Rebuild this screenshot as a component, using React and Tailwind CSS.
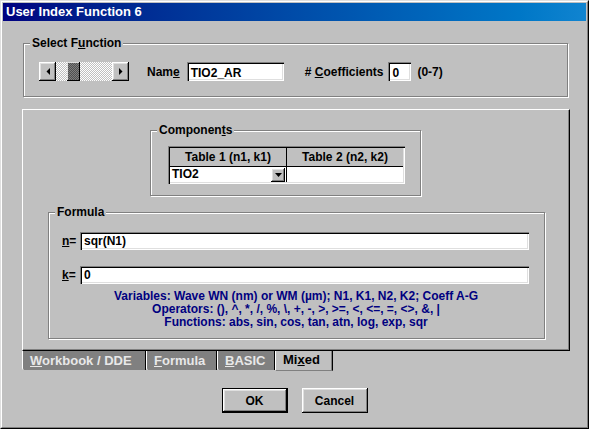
import React from 'react';

// win95 bevels
const raised = 'shadow-[inset_-1px_-1px_0_#000,inset_1px_1px_0_#fff,inset_-2px_-2px_0_#808080,inset_2px_2px_0_#dfdfdf]';
const sunken = 'shadow-[inset_1px_1px_0_#808080,inset_2px_2px_0_#000,inset_-1px_-1px_0_#fff,inset_-2px_-2px_0_#dfdfdf]';
const dither = 'bg-[repeating-conic-gradient(#c0c0c0_0_25%,#ffffff_0_50%)] bg-[length:2px_2px]';
const thumbDither = 'bg-[repeating-conic-gradient(#808080_0_25%,#505050_0_50%)] bg-[length:2px_2px]';

function GroupBox({ label, className, children }) {
  return (
    <div className={`relative border border-[#808080] shadow-[1px_1px_0_#fff,inset_1px_1px_0_#fff] ${className}`}>
      <span className="absolute -top-[8px] left-[6px] bg-[#c0c0c0] px-[2px] leading-[14px]">{label}</span>
      {children}
    </div>
  );
}

function Arrow({ dir }) {
  return (
    <svg width="4" height="7" viewBox="0 0 4 7">
      {dir === 'left' ? <polygon points="4,0 4,7 0.5,3.5" fill="#000" /> : <polygon points="0,0 0,7 3.5,3.5" fill="#000" />}
    </svg>
  );
}

function Scrollbar() {
  return (
    <div className="flex h-[19px] w-[90px]">
      <div className={`w-[17px] h-full bg-[#c0c0c0] ${raised} flex items-center justify-center`}>
        <Arrow dir="left" />
      </div>
      <div className={`flex-1 h-full ${dither} pl-[11px]`}>
        <div className={`w-[13px] h-full ${thumbDither} shadow-[inset_-1px_-1px_0_#000,inset_1px_1px_0_#dfdfdf]`} />
      </div>
      <div className={`w-[17px] h-full bg-[#c0c0c0] ${raised} flex items-center justify-center`}>
        <Arrow dir="right" />
      </div>
    </div>
  );
}

function Field({ className, children }) {
  return <div className={`bg-white ${sunken} pl-[4px] pt-[2px] ${className}`}>{children}</div>;
}

function Tab({ children, active, className }) {
  if (active) {
    return (
      <div className={`h-[20px] bg-[#c0c0c0] text-black border-l border-white border-r border-r-black border-b border-b-[#808080] shadow-[inset_-1px_0_0_#808080] leading-[18px] ${className}`}>
        {children}
      </div>
    );
  }
  return (
    <div className={`h-[19px] bg-[#808080] text-[#e8e8e8] border-l border-white border-r border-r-black leading-[19px] rounded-bl-[2px] ${className}`}>
      {children}
    </div>
  );
}

export default function App() {
  return (
    <div className="w-[589px] h-[429px] bg-[#c0c0c0] border border-t-[#dfdfdf] border-l-[#dfdfdf] border-r-black border-b-black font-['Liberation_Sans',Arial,sans-serif] font-bold text-[12px] text-black select-none">
      <div className="h-full border border-t-white border-l-white border-r-[#808080] border-b-[#808080] p-[1px] flex flex-col">
        {/* title bar */}
        <div className="h-[18px] bg-linear-to-r from-[#000080] to-[#1084d0] text-white text-[13px] leading-[18px] pl-[3px]">
          User Index Function 6
        </div>

        {/* select function */}
        <GroupBox
          label={<>Select F<u>u</u>nction</>}
          className="ml-[20px] mt-[22px] w-[545px] h-[54px]"
        >
          <div className="flex items-center pl-[15px] pt-[18px]">
            <Scrollbar />
            <span className="ml-[18px]">Nam<u>e</u></span>
            <Field className="ml-[7px] w-[97px] h-[19px]">TIO2_AR</Field>
            <span className="ml-[21px]"># <u>C</u>oefficients</span>
            <Field className="ml-[5px] w-[23px] h-[19px]">0</Field>
            <span className="ml-[6px]">(0-7)</span>
          </div>
        </GroupBox>

        {/* tab panel */}
        <div className="ml-[19px] mt-[12px] w-[548px] h-[242px] border border-t-white border-l-white border-r-black border-b-black shadow-[inset_-1px_-1px_0_#808080] flex flex-col">
          <GroupBox
            label={<>Componen<u>t</u>s</>}
            className="ml-[127px] mt-[20px] w-[271px] h-[66px]"
          >
            <div className="pl-[17px] pt-[15px]">
              <div className={`w-[237px] h-[38px] p-[2px] bg-[#c0c0c0] ${sunken}`}>
                <div className="flex h-[19px] border-b border-black">
                  <div className="w-[117px] border-r border-black text-center leading-[18px]">Table 1 (n1, k1)</div>
                  <div className="flex-1 text-center leading-[18px]">Table 2 (n2, k2)</div>
                </div>
                <div className="flex h-[15px] bg-white">
                  <div className="w-[117px] border-r border-black flex items-center pl-[2px] pr-[1px]">
                    <span className="flex-1 leading-[15px]">TIO2</span>
                    <div className={`w-[14px] h-[14px] bg-[#c0c0c0] ${raised} flex items-center justify-center`}>
                      <svg width="7" height="4" viewBox="0 0 7 4">
                        <polygon points="0,0 7,0 3.5,4" fill="#000" />
                      </svg>
                    </div>
                  </div>
                  <div className="flex-1" />
                </div>
              </div>
            </div>
          </GroupBox>

          <GroupBox label="Formula" className="ml-[25px] mt-[16px] w-[497px] h-[127px]">
            <div className="pl-[13px] pt-[19px] flex flex-col">
              <div className="flex items-center">
                <span className="w-[18px]"><u>n</u>=</span>
                <Field className="w-[449px] h-[18px] leading-[14px]">sqr(N1)</Field>
              </div>
              <div className="flex items-center mt-[16px]">
                <span className="w-[18px]"><u>k</u>=</span>
                <Field className="w-[449px] h-[18px] leading-[14px]">0</Field>
              </div>
            </div>
            <div className="mt-[6px] pr-[1px] text-center text-[#000080] leading-[13px]">
              <div>Variables: Wave WN (nm) or WM (µm); N1, K1, N2, K2; Coeff A-G</div>
              <div>Operators: (), ^, *, /, %, \, +, -, &gt;, &gt;=, &lt;, &lt;=, =, &lt;&gt;, &amp;, |</div>
              <div>Functions: abs, sin, cos, tan, atn, log, exp, sqr</div>
            </div>
          </GroupBox>
        </div>

        {/* tabs */}
        <div className="ml-[19px] flex text-[13px] items-start">
          <Tab className="w-[124px] pl-[7px]"><u>W</u>orkbook / DDE</Tab>
          <Tab className="w-[71px] pl-[7px]"><u>F</u>ormula</Tab>
          <Tab className="w-[58px] pl-[7px]"><u>B</u>ASIC</Tab>
          <Tab active className="w-[58px] pl-[7px]">Mi<u>x</u>ed</Tab>
        </div>

        {/* buttons */}
        <div className="mt-[17px] flex justify-center gap-[14px]">
          <div className="w-[66px] h-[25px] border border-black">
            <div className={`w-full h-full bg-[#c0c0c0] ${raised} flex items-center justify-center`}>OK</div>
          </div>
          <div className={`w-[66px] h-[25px] bg-[#c0c0c0] ${raised} flex items-center justify-center`}>Cancel</div>
        </div>
      </div>
    </div>
  );
}
